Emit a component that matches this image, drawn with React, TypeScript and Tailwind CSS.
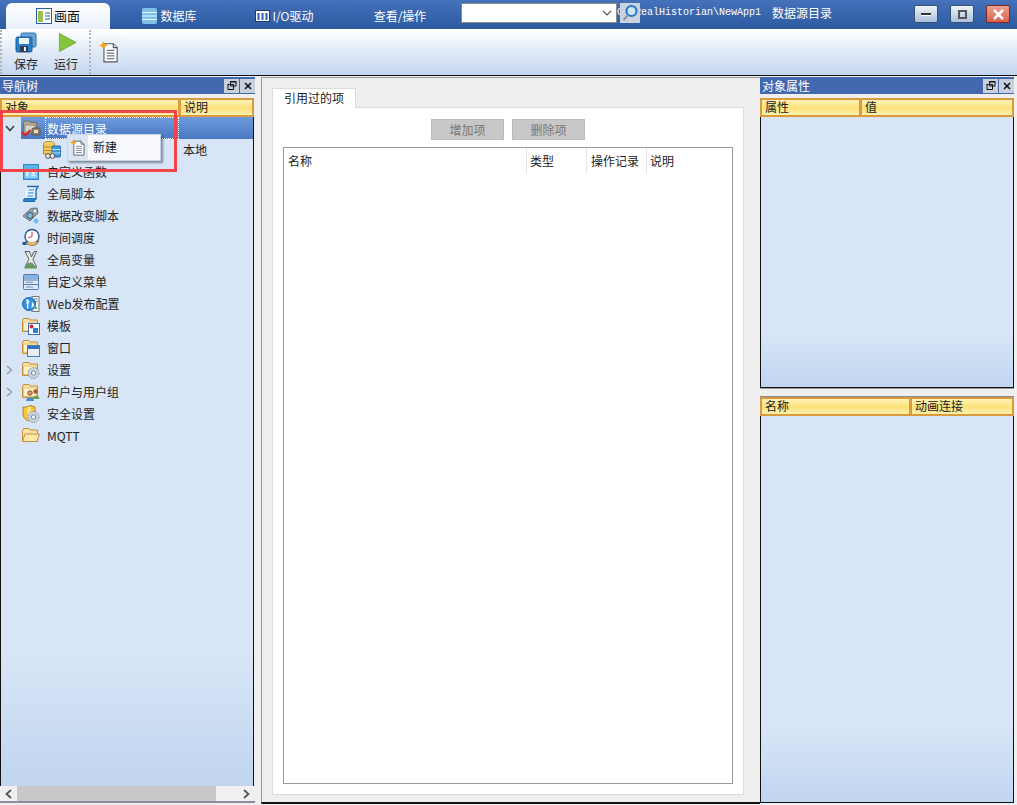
import React from 'react';

const Folder = ({ children, open }: { children?: React.ReactNode; open?: boolean }) => (
  <svg width="20" height="20" viewBox="0 0 20 20" className="shrink-0">
    <path d="M1.5 4.5 L2.5 2.5 H8 L9 4 H16.5 V15.5 H1.5 Z" fill="#f8e3a4" stroke="#c58f3c" />
    {open ? (
      <path d="M1.5 15.5 L4 8 H18.5 L16 15.5 Z" fill="#fbe9a8" stroke="#c58f3c" />
    ) : (
      <rect x="2.5" y="6" width="13" height="8.5" fill="#fdf3c8" stroke="#e6c678" />
    )}
    {children}
  </svg>
);

const Gear = () => (
  <g>
    <circle cx="12.5" cy="13" r="5.5" fill="#c9d3de" stroke="#8c99a8" strokeDasharray="2 1" />
    <circle cx="12.5" cy="13" r="2.2" fill="#eef2f6" stroke="#7d8a99" />
  </g>
);

const TreeIcon = ({ name }: { name: string }) => {
  switch (name) {
    case 'root':
      return (
        <svg width="20" height="20" viewBox="0 0 20 20" className="shrink-0">
          <path d="M2.5 5 L3.5 3 H8 L9 4.5 H15.5 V15.5 H2.5 Z" fill="#b9ad97" stroke="#7d705c" />
          <rect x="4" y="7" width="10" height="7" fill="#d6d8cf" stroke="#918b7c" />
          <rect x="11" y="10" width="8" height="7" rx="1.5" fill="#8f7f69" stroke="#5f5344" />
          <rect x="13" y="12" width="4" height="3" fill="#e3dccb" />
          <path d="M1 14 L4 17.5 L9.5 12" fill="none" stroke="#d8232a" strokeWidth="2" />
        </svg>
      );
    case 'db':
      return (
        <svg width="20" height="20" viewBox="0 0 20 20" className="shrink-0">
          <ellipse cx="7" cy="3.5" rx="5.5" ry="2" fill="#f6d776" stroke="#b98a27" />
          <path d="M1.5 3.5 V14 H12.5 V3.5" fill="#f3c95a" stroke="#b98a27" />
          <path d="M1.5 7 H12.5 M1.5 10.5 H12.5" stroke="#b98a27" />
          <rect x="10" y="6" width="8.5" height="11" rx="1" fill="#3f9be0" stroke="#1f6fb0" />
          <path d="M10 9.5 H18.5 M10 13 H18.5" stroke="#c3e3f8" />
          <circle cx="6" cy="16" r="2.4" fill="#e8e8e8" stroke="#555" />
          <circle cx="10.5" cy="16" r="2.4" fill="#e8e8e8" stroke="#555" />
        </svg>
      );
    case 'fx':
      return (
        <svg width="20" height="20" viewBox="0 0 20 20" className="shrink-0">
          <rect x="2.5" y="2.5" width="15" height="15" fill="#58b4ee" stroke="#2f86cc" />
          <rect x="4" y="7" width="12" height="9" fill="#8ed0f6" />
          <path d="M6 9 H9 M6 9 V14 M6 11 H8 M11 10 L14 14 M14 10 L11 14" stroke="#fff" strokeWidth="1.2" fill="none" />
        </svg>
      );
    case 'script':
      return (
        <svg width="20" height="20" viewBox="0 0 20 20" className="shrink-0">
          <path d="M6 2.5 H17 C16 4 15 5 15 7 V15 H3" fill="#e6f2fc" stroke="#1d6fbd" strokeWidth="1.4" />
          <path d="M2.5 17.5 C2 15.5 3 14.5 5 14.5 H14.5 C13.5 15.5 13.5 16.5 14 17.5 Z" fill="#2b83cf" stroke="#1d6fbd" />
          <path d="M7.5 6 H13 M7 9 H12.5 M6.5 12 H12" stroke="#2b83cf" />
        </svg>
      );
    case 'change':
      return (
        <svg width="20" height="20" viewBox="0 0 20 20" className="shrink-0">
          <path d="M2 10 L10 2.5 L16 2 L17 7 L9 15 Z" fill="#9aa3ad" stroke="#67707a" />
          <circle cx="9" cy="9.5" r="3" fill="#7cb8e4" stroke="#4a5560" />
          <circle cx="14" cy="5" r="1.2" fill="#fff" />
          <path d="M15 12 L18 15 L15 18 L12 15 Z" fill="#6cc0f0" />
        </svg>
      );
    case 'clock':
      return (
        <svg width="20" height="20" viewBox="0 0 20 20" className="shrink-0">
          <path d="M4 14 C7 11 14 11 18 13 C16 18.5 8 19 4 14 Z" fill="#e2b878" stroke="#a87a3c" />
          <circle cx="11" cy="8.5" r="7" fill="#fff" stroke="#27568f" strokeWidth="1.4" />
          <path d="M11 4 V8.5 L7 10" stroke="#c33" fill="none" />
          <path d="M6 15 C9 13 13 13 16 14.5 C13 17.5 9 17.5 6 15 Z" fill="#e2b878" />
          <rect x="1.5" y="14" width="4" height="3" fill="#27568f" />
        </svg>
      );
    case 'var':
      return (
        <svg width="20" height="20" viewBox="0 0 20 20" className="shrink-0">
          <path d="M4 1.5 H8.5 L10.5 7 L13 1.5 H15.5 L12 9.5 L15.5 17 H11 L9.5 12.5 L7 17 H4 L8 9 Z" fill="#e9e9e9" stroke="#5c5c5c" />
          <path d="M3 18.5 L7.5 12.5 L9.5 15 L11 12.5 L16 18.5 Z" fill="#5f9a58" />
        </svg>
      );
    case 'menu':
      return (
        <svg width="20" height="20" viewBox="0 0 20 20" className="shrink-0">
          <rect x="2.5" y="2.5" width="15" height="15" rx="1" fill="#dfe9f5" stroke="#4c7fb5" />
          <rect x="3" y="3" width="14" height="4" fill="#8ab1dc" />
          <path d="M3 8 H17 M3 12.5 H17" stroke="#4c7fb5" />
          <path d="M5 10.2 H12 M5 15 H12" stroke="#7a8ea6" />
        </svg>
      );
    case 'web':
      return (
        <svg width="20" height="20" viewBox="0 0 20 20" className="shrink-0">
          <rect x="11" y="2.5" width="7" height="15" fill="#eef1f4" stroke="#6f7a85" />
          <path d="M12.5 5 H16.5 M12.5 7.5 H16.5" stroke="#6f7a85" />
          <rect x="14" y="13" width="2" height="2" fill="#4bb04b" />
          <circle cx="8" cy="10" r="6.5" fill="#2f8fe0" stroke="#1a64ad" />
          <path d="M5 6 C7 5 9 7 7.5 9 C6 11 8 13 6.5 15 M11 8 L13 11 L10.5 14" fill="#dff1ff" stroke="#dff1ff" />
        </svg>
      );
    case 'template':
      return (
        <Folder>
          <rect x="7.5" y="7.5" width="11" height="11" fill="#fff" stroke="#3a6fb5" />
          <circle cx="10.5" cy="10.5" r="2" fill="#d8232a" />
          <rect x="12" y="12" width="5" height="5" fill="#2b83cf" />
        </Folder>
      );
    case 'window':
      return (
        <Folder>
          <rect x="6.5" y="7.5" width="12" height="11" fill="#e9edf3" stroke="#4c7fb5" />
          <rect x="7" y="8" width="11" height="3" fill="#2f74c4" />
        </Folder>
      );
    case 'settings':
      return (
        <Folder>
          <Gear />
        </Folder>
      );
    case 'users':
      return (
        <Folder>
          <circle cx="9" cy="11" r="2.2" fill="#e0a070" stroke="#8a4a20" />
          <path d="M5 19 C5 14 13 14 13 19 Z" fill="#4a89c8" />
          <circle cx="14.5" cy="9.5" r="2.2" fill="#b5552c" />
          <path d="M11.5 17 C11.5 12.5 18.5 12.5 18.5 17 Z" fill="#67a25c" />
        </Folder>
      );
    case 'security':
      return (
        <svg width="20" height="20" viewBox="0 0 20 20" className="shrink-0">
          <path d="M2 3 H6 L9.5 1.5 L14 3 V10 C14 14 10 16 8 17 C5 16 2 13.5 2 10 Z" fill="#f3c63d" stroke="#b38418" />
          <path d="M8 3 V16" stroke="#fbe69a" strokeWidth="3" />
          <Gear />
        </svg>
      );
    default:
      return <Folder open />;
  }
};

const NewDocIcon = ({ size = 20 }: { size?: number }) => (
  <svg width={size} height={size} viewBox="0 0 20 20">
    <path d="M4.5 2.5 H13 L16.5 6 V19 H4.5 Z" fill="#fff" stroke="#4d5460" />
    <path d="M13 2.5 V6 H16.5" fill="#dfe3ea" stroke="#4d5460" />
    <path d="M7 8.5 H14 M7 11 H14 M7 13.5 H14 M7 16 H14" stroke="#6e7784" />
    <path d="M4 0 L5.2 2.8 L8 4 L5.2 5.2 L4 8 L2.8 5.2 L0 4 L2.8 2.8 Z" fill="#f5a511" />
  </svg>
);

const PanelTitle = ({ title }: { title: string }) => (
  <div className="h-[17px] shrink-0 bg-[#4268ae] flex items-center justify-between text-white text-[12px]">
    <span className="pl-[2px]">{title}</span>
    <div className="flex gap-px">
      <div className="w-[15px] h-[14px] bg-[#c8d0de] flex items-center justify-center">
        <svg width="10" height="9" viewBox="0 0 10 9">
          <path d="M3.5 0.5 H9 V5 H3.5 Z M1 3.5 H6.5 V8.5 H1 Z" fill="none" stroke="#111" />
          <path d="M3 1 H9.5 M0.5 3.5 H6" stroke="#111" />
        </svg>
      </div>
      <div className="w-[15px] h-[14px] bg-[#c8d0de] flex items-center justify-center">
        <svg width="8" height="8" viewBox="0 0 8 8">
          <path d="M1 1 L7 7 M7 1 L1 7" stroke="#111" strokeWidth="1.6" />
        </svg>
      </div>
    </div>
  </div>
);

const HeaderCell = ({ label, className }: { label: string; className: string }) => (
  <div
    className={`h-[19px] border-2 border-[#da9a3d] bg-gradient-to-b from-[#fdf3b8] via-[#fde27a] to-[#fdf1ac] text-[12px] leading-[14px] pl-[3px] text-[#222] ${className}`}
  >
    {label}
  </div>
);

const PANE_BG = 'bg-gradient-to-b from-[#d8e5f6] from-80% to-[#c1d5f0]';

const treeRows = [
  { icon: 'fx', label: '自定义函数' },
  { icon: 'script', label: '全局脚本' },
  { icon: 'change', label: '数据改变脚本' },
  { icon: 'clock', label: '时间调度' },
  { icon: 'var', label: '全局变量' },
  { icon: 'menu', label: '自定义菜单' },
  { icon: 'web', label: 'Web发布配置' },
  { icon: 'template', label: '模板' },
  { icon: 'window', label: '窗口' },
  { icon: 'settings', label: '设置', arrow: true },
  { icon: 'users', label: '用户与用户组', arrow: true },
  { icon: 'security', label: '安全设置' },
  { icon: 'mqtt', label: 'MQTT' },
];

const Tab = ({ label, icon, active, className }: { label: string; icon?: React.ReactNode; active?: boolean; className: string }) => (
  <div
    className={`h-[26px] rounded-t-[6px] flex items-center justify-center ${
      active
        ? 'bg-gradient-to-b from-white to-[#e8f0fa] text-[#111] text-[13px] gap-[2px]'
        : 'bg-gradient-to-b from-[#406db7] to-[#2d5ba1] text-white text-[12px] gap-[3px]'
    } ${className}`}
  >
    {icon}
    <span>{label}</span>
  </div>
);

const WinButton = ({ children, red }: { children: React.ReactNode; red?: boolean }) => (
  <div
    className={`w-[24px] h-[18px] rounded-[2px] border border-[#3b4f70] flex items-center justify-center ${
      red ? 'bg-gradient-to-b from-[#eaa08e] to-[#d9604a] border-[#7a2a20]' : 'bg-gradient-to-b from-[#f0f4fa] to-[#a9bfdc]'
    }`}
  >
    {children}
  </div>
);

const ToolbarGrip = () => <div className="w-[3px] h-[44px] border-l-2 border-dotted border-[#b5b5b5]" />;

export default function App() {
  return (
    <div
      className="w-[1017px] h-[805px] flex flex-col overflow-hidden bg-[#efefef] relative"
      style={{ fontFamily: '"Noto Sans CJK SC", "Liberation Sans", sans-serif' }}
    >
      {/* title bar */}
      <div className="h-[29px] shrink-0 bg-gradient-to-b from-[#4572bb] to-[#2c5a9f] flex items-end">
        <Tab
          active
          label="画面"
          className="w-[104px] ml-[6px]"
          icon={
            <svg width="16" height="16" viewBox="0 0 16 16">
              <rect x="0.5" y="0.5" width="15" height="15" fill="#fff" stroke="#2c5f9e" />
              <rect x="2" y="3" width="5" height="11" fill="#9cc04c" />
              <path d="M9 5 H14 M9 8 H14 M9 11 H14" stroke="#2c5f9e" />
            </svg>
          }
        />
        <Tab
          label="数据库"
          className="w-[109px] ml-[5px]"
          icon={
            <svg width="15" height="16" viewBox="0 0 15 16">
              <rect x="0" y="0" width="15" height="16" rx="2" fill="#7fc0ec" />
              <path d="M0 4.5 H15 M0 8 H15 M0 11.5 H15" stroke="#e5f4fd" />
            </svg>
          }
        />
        <Tab
          label="I/O驱动"
          className="w-[106px] ml-[7px]"
          icon={
            <svg width="15" height="14" viewBox="0 0 15 14">
              <rect x="0.5" y="1.5" width="14" height="11" fill="#fff" stroke="#1e3a66" />
              <path d="M3.5 4 V11 M7.5 4 V11 M11.5 4 V11" stroke="#2f5da3" strokeWidth="2" />
            </svg>
          }
        />
        <Tab label="查看/操作" className="w-[106px] ml-[10px]" />
        <div className="flex items-center self-start mt-[3px] ml-[8px] relative">
          <div className="w-[156px] h-[20px] bg-white border border-[#8a8a8a] flex items-center justify-end pr-[4px]">
            <svg width="10" height="6" viewBox="0 0 10 6">
              <path d="M1 1 L5 5 L9 1" fill="none" stroke="#555" strokeWidth="1.2" />
            </svg>
          </div>
          <span className="text-[10px] leading-[20px] w-[145px] text-white whitespace-pre" style={{ fontFamily: '"Liberation Mono", monospace' }}>
            C:\RealHistorian\NewApp1
          </span>
          <div className="absolute left-[159px] top-0 w-[20px] h-[20px] bg-[#c9d2de] flex items-center justify-center">
            <svg width="18" height="18" viewBox="0 0 18 18">
              <circle cx="10.5" cy="7" r="5" fill="#cfe4f7" stroke="#2878c8" strokeWidth="2.2" />
              <path d="M7 11 L2.5 16" stroke="#8b98a8" strokeWidth="2.4" />
            </svg>
          </div>
          <span className="text-[12px] text-white ml-[10px] w-[142px]">数据源目录</span>
        </div>
        <div className="flex gap-[12px] self-start mt-[5px]">
          <WinButton>
            <div className="w-[10px] h-[3px] bg-[#333] border-b border-white" />
          </WinButton>
          <WinButton>
            <div className="w-[9px] h-[9px] border-2 border-[#555]" />
          </WinButton>
          <WinButton red>
            <svg width="13" height="11" viewBox="0 0 13 11">
              <path d="M2 1 L11 10 M11 1 L2 10" stroke="#fff" strokeWidth="2.6" />
            </svg>
          </WinButton>
        </div>
      </div>

      {/* toolbar */}
      <div className="h-[46px] shrink-0 bg-gradient-to-b from-white to-[#c3d6ef] flex items-center text-[12px] text-[#222]">
        <ToolbarGrip />
        <div className="w-[40px] ml-[3px] flex flex-col items-center">
          <svg width="22" height="21" viewBox="0 0 22 21">
            <rect x="6" y="1" width="15" height="14" rx="1.5" fill="#6aa8dc" stroke="#2f6da8" />
            <rect x="1" y="5" width="16" height="15" rx="1.5" fill="#2a7fcb" stroke="#1d5a94" />
            <rect x="4" y="6" width="10" height="6" fill="#e8f3fb" />
            <rect x="5" y="14" width="8" height="6" fill="#31404f" />
            <rect x="9" y="15" width="2" height="4" fill="#e8f3fb" />
          </svg>
          <span className="leading-[18px] mt-[2px]">保存</span>
        </div>
        <div className="w-[40px] flex flex-col items-center">
          <svg width="19" height="21" viewBox="0 0 20 21" className="ml-[2px]">
            <path d="M1.5 1 L19 10.5 L1.5 20 Z" fill="#86c440" stroke="#6fae35" />
          </svg>
          <span className="leading-[18px] mt-[2px]">运行</span>
        </div>
        <div className="ml-[3px]">
          <ToolbarGrip />
        </div>
        <div className="w-[29px] h-[29px] ml-[3px] -mt-[1px] bg-gradient-to-b from-[#f2f6fc] to-[#d2e0f3] flex items-center justify-center">
          <NewDocIcon size={22} />
        </div>
      </div>
      <div className="h-px shrink-0 bg-[#111]" />

      <div className="flex-1 min-h-0 flex">
        {/* navigation tree */}
        <div className="w-[255px] shrink-0 flex flex-col pt-px pb-[2px]">
          <PanelTitle title="导航树" />
          <div className="mt-[4px] flex">
            <HeaderCell label="对象" className="w-[180px]" />
            <HeaderCell label="说明" className="w-[75px] -ml-[1px]" />
          </div>
          <div className={`flex-1 min-h-0 mr-px border-x border-[#111] text-[12px] text-[#222] ${PANE_BG}`}>
            <div className="h-[22px] flex items-center">
              <svg width="10" height="7" viewBox="0 0 10 7" className="ml-[4px] mr-[6px]">
                <path d="M1 1 L5 5.5 L9 1" fill="none" stroke="#444" strokeWidth="1.6" />
              </svg>
              <div className="flex-1 h-full flex items-center bg-gradient-to-b from-[#6d9bdd] to-[#4a78c2]">
                <TreeIcon name="root" />
                <span className="ml-[4px] w-[134px] h-full leading-[22px] text-white border border-dotted border-white pl-px">数据源目录</span>
              </div>
            </div>
            <div className="h-[22px] flex items-center pl-[41px]">
              <TreeIcon name="db" />
              <span className="ml-[121px]">本地</span>
            </div>
            {treeRows.map((row) => (
              <div key={row.label} className="h-[22px] flex items-center">
                <div className="w-[20px] shrink-0 pl-[5px]">
                  {row.arrow && (
                    <svg width="7" height="10" viewBox="0 0 7 10">
                      <path d="M1 1 L5.5 5 L1 9" fill="none" stroke="#9aa0a8" strokeWidth="1.6" />
                    </svg>
                  )}
                </div>
                <TreeIcon name={row.icon} />
                <span className="ml-[6px]">{row.label}</span>
              </div>
            ))}
          </div>
          <div className="h-[17px] shrink-0 bg-[#f0f0f0] border-b-2 border-[#8a8f98] flex items-center">
            <svg width="7" height="10" viewBox="0 0 7 10" className="ml-[5px]">
              <path d="M6 1 L1.5 5 L6 9" fill="none" stroke="#555" strokeWidth="1.8" />
            </svg>
            <div className="w-[199px] h-[15px] ml-[5px] bg-[#c8c8c8]" />
            <svg width="7" height="10" viewBox="0 0 7 10" className="ml-[27px]">
              <path d="M1 1 L5.5 5 L1 9" fill="none" stroke="#555" strokeWidth="1.8" />
            </svg>
          </div>
        </div>

        {/* center */}
        <div className="w-[505px] shrink-0 flex flex-col pl-[6px] pt-px pb-px text-[12px] text-[#222]">
          <div className="flex-1 flex flex-col border-l border-t border-b-2 border-t-[#9a9a9a] border-l-[#9a9a9a] border-b-[#111] bg-[#efefef] pl-[10px] pr-[16px] pt-[10px] pb-[7px]">
            <div className="w-[84px] h-[20px] bg-white border border-[#dcdcdc] border-b-0 leading-[18px] text-center relative z-10 -mb-px">
              引用过的项
            </div>
            <div className="flex-1 flex flex-col bg-white border border-[#dcdcdc] px-[10px] pt-[11px] pb-[10px]">
              <div className="flex justify-center gap-[8px] text-[#777]">
                <div className="w-[73px] h-[21px] bg-[#c8c8c8] border border-[#bbb] text-center leading-[19px]">增加项</div>
                <div className="w-[73px] h-[21px] bg-[#c8c8c8] border border-[#bbb] text-center leading-[19px]">删除项</div>
              </div>
              <div className="flex-1 mt-[7px] border border-[#9a9a9a]">
                <div className="h-[26px] flex">
                  <div className="w-[243px] pl-[4px] leading-[26px] border-r border-[#e5e5e5]">名称</div>
                  <div className="w-[60px] pl-[3px] leading-[26px] border-r border-[#e5e5e5]">类型</div>
                  <div className="w-[60px] pl-[4px] leading-[26px] border-r border-[#e5e5e5]">操作记录</div>
                  <div className="w-[60px] pl-[3px] leading-[26px]">说明</div>
                </div>
              </div>
            </div>
          </div>
        </div>

        {/* right panels */}
        <div className="flex-1 min-w-0 flex flex-col pt-px pr-[3px] pb-[2px]">
          <PanelTitle title="对象属性" />
          <div className="mt-[4px] flex">
            <HeaderCell label="属性" className="w-[101px]" />
            <HeaderCell label="值" className="flex-1 -ml-[1px]" />
          </div>
          <div className={`h-[271px] shrink-0 border-x border-b border-[#111] ${PANE_BG}`} />
          <div className="h-px shrink-0 bg-[#9a9a9a]" />
          <div className="mt-[7px] flex border-t border-[#8a8a8a]">
            <HeaderCell label="名称" className="w-[151px]" />
            <HeaderCell label="动画连接" className="flex-1 -ml-[1px]" />
          </div>
          <div className={`flex-1 min-h-0 border-x border-b border-[#111] ${PANE_BG}`} />
        </div>
      </div>

      {/* context menu, over the tree */}
      <div className="absolute left-[67px] top-[134px] w-[94px] h-[27px] bg-[#f7f9fd] border border-[#c8d3e3] shadow-[2px_2px_2px_rgba(60,70,90,0.55)] flex items-center text-[12px] text-[#222]">
        <div className="w-[21px] h-full bg-[#dbe4f1] flex items-center justify-center border-r border-[#fff]">
          <NewDocIcon size={17} />
        </div>
        <span className="ml-[4px] -mt-[2px]">新建</span>
      </div>

      {/* annotation box from the screenshot */}
      <div className="absolute left-0 top-[110px] w-[177px] h-[62px] border-[3px] border-[#f0444a]" />
    </div>
  );
}
